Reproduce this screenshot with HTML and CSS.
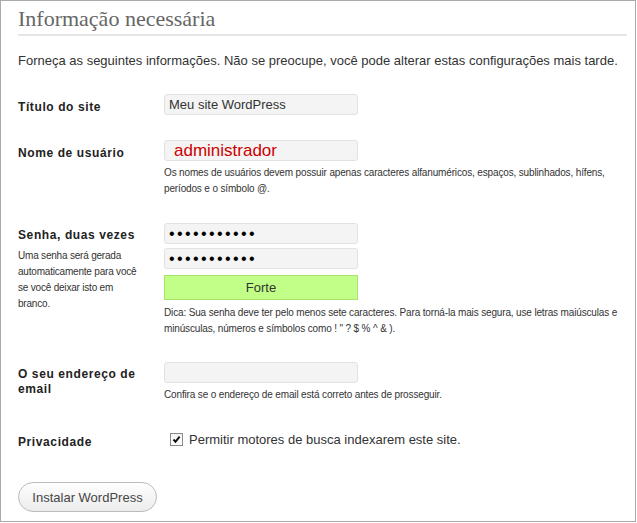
FILE: index.html
```html
<!DOCTYPE html>
<html lang="pt-BR">
<head>
  <meta charset="UTF-8">
  <title>Instalação do WordPress</title>
  <link rel="stylesheet" href="styles.css">
</head>
<body>
  <div class="wrap">
    <h1>Informação necessária</h1>
    <p class="intro">Forneça as seguintes informações. Não se preocupe, você pode alterar estas configurações mais tarde.</p>

    <form class="setup">
      <div class="row row-title">
        <label class="label" for="weblog_title">Título do site</label>
        <div class="field">
          <input class="text" type="text" id="weblog_title" value="Meu site WordPress">
        </div>
      </div>

      <div class="row row-user">
        <label class="label" for="user_login">Nome de usuário</label>
        <div class="field">
          <input class="text user" type="text" id="user_login" value="administrador">
          <p class="desc">Os nomes de usuários devem possuir apenas caracteres alfanuméricos, espaços, sublinhados, hífens, períodos e o símbolo @.</p>
        </div>
      </div>

      <div class="row row-pass">
        <div class="label">
          <label for="pass1">Senha, duas vezes</label>
          <p class="side-desc">Uma senha será gerada automaticamente para você se você deixar isto em branco.</p>
        </div>
        <div class="field">
          <input class="text pass" type="password" id="pass1" value="aaaaaaaaaaa">
          <input class="text pass" type="password" id="pass2" value="aaaaaaaaaaa">
          <div class="strength">Forte</div>
          <p class="desc">Dica: Sua senha deve ter pelo menos sete caracteres. Para torná-la mais segura, use letras maiúsculas e minúsculas, números e símbolos como ! " ? $ % ^ &amp; ).</p>
        </div>
      </div>

      <div class="row row-email">
        <label class="label" for="admin_email">O seu endereço de email</label>
        <div class="field">
          <input class="text" type="text" id="admin_email" value="">
          <p class="desc">Confira se o endereço de email está correto antes de prosseguir.</p>
        </div>
      </div>

      <div class="row row-privacy">
        <div class="label">Privacidade</div>
        <div class="field">
          <label class="check">
            <span class="box">
              <svg width="11" height="11" viewBox="0 0 11 11"><path d="M2.5 5.5 L4.5 7.8 L8.6 2.6" fill="none" stroke="#111" stroke-width="2"/></svg>
            </span>
            Permitir motores de busca indexarem este site.
          </label>
        </div>
      </div>

      <button class="install" type="submit">Instalar WordPress</button>
    </form>
  </div>
</body>
</html>
```

FILE: styles.css
```css
body {
  margin: 0;
  padding: 0;
  background: #fff;
  font-family: 'Liberation Sans', Arial, sans-serif;
  color: #333;
}

.wrap {
  width: 617px;
  height: 520px;
  border: 1px solid #aaa;
  padding: 0 0 0 17px;
  overflow: hidden;
}

h1 {
  margin: 0;
  padding: 5px 0 2px 0;
  width: 609px;
  font-family: 'Liberation Serif', Georgia, serif;
  font-weight: normal;
  font-size: 22px;
  color: #666;
  border-bottom: 2px solid #e6e6e6;
}

.intro {
  margin: 17px 0 0 0;
  font-size: 13px;
  line-height: 16px;
  color: #333;
}

.setup {
  margin-top: 25px;
}

.row {
  display: flex;
}

.label {
  width: 146px;
  flex: none;
  font-size: 12px;
  font-weight: bold;
  letter-spacing: 0.6px;
  color: #222;
  line-height: 15px;
}

.field {
  width: 470px;
}

.text {
  display: block;
  width: 194px;
  height: 21px;
  box-sizing: border-box;
  margin: 0;
  padding: 0 4px;
  border: 1px solid #e2e2e2;
  border-radius: 3px;
  background: #f4f4f4;
  font-family: 'Liberation Sans', Arial, sans-serif;
  font-size: 13px;
  color: #333;
}

.user {
  font-size: 17px;
  color: #c00;
  padding-left: 9px;
}

.pass {
  font-size: 16px;
  letter-spacing: 2.4px;
  color: #000;
  margin-bottom: 4px;
}

.desc {
  width: 462px;
  margin: 4px 0 0 0;
  font-size: 10px;
  letter-spacing: -0.15px;
  line-height: 16px;
  color: #333;
}

.side-desc {
  width: 124px;
  margin: 5px 0 0 0;
  font-size: 10px;
  font-weight: normal;
  letter-spacing: -0.2px;
  line-height: 16px;
  color: #333;
}

.row-title .label {
  padding-top: 6px;
}

.row-user {
  margin-top: 25px;
}

.row-user .label {
  padding-top: 6px;
}

.row-pass {
  margin-top: 26px;
}

.row-pass .label {
  padding-top: 5px;
}

.strength {
  width: 194px;
  height: 25px;
  box-sizing: border-box;
  margin-top: 6px;
  border: 1px solid #a8e26b;
  background: #c1ff88;
  text-align: center;
  font-size: 13px;
  line-height: 23px;
  color: #333;
}

.row-pass .desc {
  margin-top: 5px;
}

.row-email {
  margin-top: 25px;
}

.row-email .label {
  padding-top: 5px;
  padding-right: 20px;
  width: 126px;
}

.row-privacy {
  margin-top: 29px;
}

.row-privacy .label {
  padding-top: 3px;
}

.check {
  display: flex;
  align-items: center;
  gap: 6px;
  margin-left: 6px;
  font-size: 13px;
  color: #333;
}

.box {
  display: inline-flex;
  width: 11px;
  height: 11px;
  border: 1px solid #8a8a8a;
  background: linear-gradient(#f4f4f4, #fff);
}

.install {
  display: block;
  margin-top: 32px;
  width: 139px;
  height: 30px;
  border: 1px solid #bbb;
  border-radius: 15px;
  background: linear-gradient(#fefefe, #ececec);
  font-family: 'Liberation Sans', Arial, sans-serif;
  font-size: 13px;
  color: #464646;
  cursor: pointer;
}
```
